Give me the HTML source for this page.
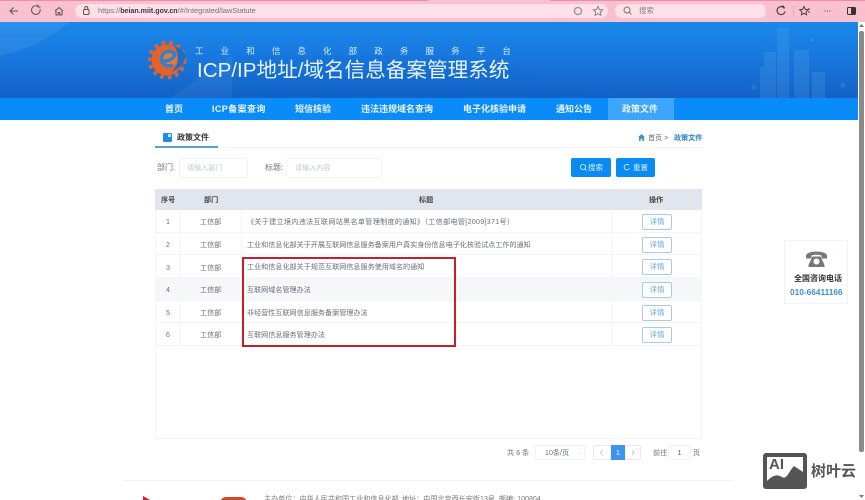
<!DOCTYPE html>
<html lang="zh"><head><meta charset="utf-8"><title>政策文件</title>
<style>
*{box-sizing:border-box}
html,body{margin:0;padding:0;width:865px;height:500px;overflow:hidden;background:#fff}
body{position:relative;font-family:"Liberation Sans","Noto Sans CJK SC",sans-serif;color:#666}
#p{position:absolute;left:0;top:0;width:865px;height:500px;overflow:hidden;filter:blur(.3px)}
.a{position:absolute;white-space:nowrap}
.row{position:absolute;left:155px;width:547px;border-bottom:1px solid #f1f3f5}
.c{position:absolute;white-space:nowrap;font-size:7.1px;line-height:12px;color:#68707a}
.btn{position:absolute;left:642px;width:30px;height:16px;border:1px solid #a9cbe6;border-radius:2px;font-size:7.5px;line-height:14px;text-align:center;color:#6aa6d6;background:#fff}
.nav{position:absolute;top:98px;height:22px;line-height:22px;font-size:9px;font-weight:bold;color:#eaf5ff;white-space:nowrap}
.sub{position:absolute;left:195px;top:46px;width:316px;display:flex;justify-content:space-between;font-size:8.5px;line-height:11px;color:#d9ecff}
.v{position:absolute;width:1px;background:#f3f5f7;top:210px;height:136px}
</style></head><body><div id="p">

<!-- browser bar -->
<div class="a" style="left:0;top:0;width:865px;height:22px;background:#f9c1d0"></div>
<div class="a" style="left:0;top:0;width:428px;height:1px;background:#ee8ea6"></div>
<div class="a" style="left:550px;top:0;width:315px;height:1px;background:#ee8ea6"></div>
<div class="a" style="left:75px;top:4px;width:533px;height:14px;border-radius:7px;background:#fde0e8"></div>
<div class="a" style="left:615px;top:4px;width:151px;height:14px;border-radius:7px;background:#fde0e8"></div>
<svg class="a" style="left:0;top:0" width="865" height="22" fill="none" stroke="#5d5358" stroke-width="1">
<path d="M18 11H10M13.500 7.500L10 11l3.500 3.500"/>
<path d="M40 9a4.300 4.300 0 1 1-1.500-2.300M38 4.500v2.500h2.500" />
<path d="M55 11l4-3.500 4 3.500M56 10.500V15h2.200v-2.500h1.600V15H62v-4.500"/>
<rect x="83.500" y="9.500" width="5.500" height="5" rx="1"/><path d="M84.800 9.500V8a1.500 1.500 0 0 1 3 0v1.500"/>
<circle cx="578" cy="11" r="3.600" stroke="#9a9a9a" stroke-width="1.400"/>
<path d="M598 6.500l1.400 3 3.300.4-2.400 2.200.6 3.200-2.900-1.600-2.900 1.600.6-3.200-2.400-2.200 3.300-.4z" stroke="#8c8286"/>
<circle cx="627" cy="10" r="3" stroke="#7a7478"/><path d="M629.300 12.300l2.200 2.200" stroke="#7a7478"/>
<path d="M784.500 8.500a4 4 0 1 0 .5 3M781 6.500l2-.5 1.500 2" stroke="#4a4448" stroke-width="1.200"/>
<path d="M793.500 6v10" stroke="#e8a8b8"/>
<path d="M804 6.500l1.300 2.800 3 .4-2.200 2.100.5 3-2.600-1.500-2.600 1.500.5-3-2.200-2.100 3-.4z" stroke="#4a4448"/>
<path d="M808 9h2M808 12h2" stroke="#4a4448"/>
<path d="M824.500 11h1M827 11h1M829.500 11h1" stroke="#4a4448"/>
<rect x="847.500" y="7.500" width="8" height="7" rx="1" stroke="#333"/><rect x="851" y="8" width="4" height="6" fill="#333" stroke="none"/>
</svg>
<div class="a" style="left:98px;top:5px;font-size:7.400px;line-height:12px;color:#77707a">https://<span style="color:#3c3842;font-weight:bold;font-size:7.100px">beian.miit.gov.cn</span>/#/Integrated/lawStatute</div>
<div class="a" style="left:639px;top:5px;font-size:7.500px;line-height:12px;color:#8a8088">搜索</div>

<!-- header -->
<div class="a" style="left:0;top:22px;width:858px;height:76px;background:linear-gradient(180deg,#1a88ea 0%,#1878de 45%,#1462c6 100%);overflow:hidden">
<svg width="858" height="76" style="position:absolute;left:0;top:0">
<path d="M0 0H70Q40 25 0 34Z" fill="#fff" opacity=".07"/>
<path d="M170 76L232 34V76Z" fill="#fff" opacity=".05"/>
<path d="M232 34H470L620 76H232Z" fill="#0d5ec8" opacity=".1"/>
<g fill="#6fb4f0" opacity=".18">
<rect x="760" y="45" width="14" height="31"/><rect x="764" y="30" width="12" height="46"/>
<rect x="777" y="6" width="12" height="70"/><rect x="794" y="28" width="15" height="48"/><rect x="812" y="50" width="13" height="26"/>
<circle cx="754" cy="65" r="2.500"/><circle cx="812" cy="18" r="2"/><circle cx="843" cy="63" r="2.500"/>
</g>
</svg>
</div>
<!-- logo -->
<svg class="a" style="left:148px;top:39px" width="42" height="42" viewBox="0 0 42 42">
<circle cx="19" cy="21" r="15.500" fill="#e2622a"/>
<circle cx="19" cy="21" r="17.500" fill="none" stroke="#e2622a" stroke-width="4" stroke-dasharray="3.500 4.200"/>
<circle cx="21" cy="20" r="8" fill="#e9792f"/>
<path d="M13 22C19 23 25 20 27 16C24 11 17 11 14 17C12 23 17 29 25 26" fill="none" stroke="#2284e0" stroke-width="3.200"/>
<path d="M26 7C33 9 37 14 38 17C36 25 30 31 23 33C30 28 33 17 26 7Z" fill="#1a6fc8"/>
</svg>
<div class="sub"><span>工</span><span>业</span><span>和</span><span>信</span><span>息</span><span>化</span><span>部</span><span>政</span><span>务</span><span>服</span><span>务</span><span>平</span><span>台</span></div>
<div class="a" style="left:197px;top:58px;font-size:20.600px;line-height:26px;color:#eaf4ff">ICP/IP地址/域名信息备案管理系统</div>

<!-- nav -->
<div class="a" style="left:0;top:98px;width:858px;height:22px;background:#0a8bfa"></div>
<div class="a" style="left:608px;top:98px;width:66px;height:22px;background:#3da5fb"></div>
<div class="nav" style="left:165px">首页</div>
<div class="nav" style="left:212px;letter-spacing:.4px">ICP备案查询</div>
<div class="nav" style="left:295px">短信核验</div>
<div class="nav" style="left:361px">违法违规域名查询</div>
<div class="nav" style="left:463px">电子化核验申请</div>
<div class="nav" style="left:556px">通知公告</div>
<div class="nav" style="left:622px">政策文件</div>

<!-- section title -->
<div class="a" style="left:155px;top:147px;width:547px;height:1px;background:#f1f3f5"></div>
<div class="a" style="left:155px;top:146px;width:63px;height:2px;background:#5aa0d8"></div>
<div class="a" style="left:163px;top:133px;width:9px;height:9px;background:#1a8ee8;border-radius:1px"></div>
<div class="a" style="left:168px;top:134px;width:3px;height:3px;background:#cfe8fb"></div>
<div class="a" style="left:177px;top:131px;font-size:8px;line-height:14px;font-weight:bold;color:#333">政策文件</div>
<svg class="a" style="left:638px;top:134px" width="7" height="7"><path d="M3.500 0L7 3.200H6V7H4.300V4.800H2.700V7H1V3.200H0Z" fill="#4d8fc4"/></svg>
<div class="a" style="left:648px;top:131px;font-size:7.100px;line-height:14px;color:#666">首页 &gt;</div>
<div class="a" style="left:674px;top:131px;font-size:7.100px;line-height:14px;font-weight:bold;color:#2b83cc">政策文件</div>

<!-- filters -->
<div class="a" style="left:157px;top:162px;font-size:8px;line-height:12px;color:#777">部门:</div>
<div class="a" style="left:179px;top:158px;width:69px;height:20px;border:1px solid #f0f2f4;border-radius:2px"></div>
<div class="a" style="left:187px;top:162px;font-size:7.100px;line-height:12px;color:#c4c9ce">请输入部门</div>
<div class="a" style="left:265px;top:162px;font-size:8px;line-height:12px;color:#777">标题:</div>
<div class="a" style="left:286px;top:158px;width:96px;height:20px;border:1px solid #f0f2f4;border-radius:2px"></div>
<div class="a" style="left:295px;top:162px;font-size:7.100px;line-height:12px;color:#c4c9ce">请输入内容</div>
<div class="a" style="left:571px;top:158px;width:40px;height:19px;background:#0a8bf2;border-radius:2px"></div>
<div class="a" style="left:616px;top:158px;width:39px;height:19px;background:#0a8bf2;border-radius:2px"></div>
<svg class="a" style="left:571px;top:158px" width="84" height="19" fill="none" stroke="#cfe8ff" stroke-width=".9">
<circle cx="12" cy="9" r="2.600"/><path d="M14 11l1.500 1.500"/>
<path d="M58 7.200a2.800 2.800 0 1 0 .5 3"/>
</svg>
<div class="a" style="left:588px;top:161px;font-size:7.500px;line-height:13px;color:#d8eeff">搜索</div>
<div class="a" style="left:633px;top:161px;font-size:7.500px;line-height:13px;color:#d8eeff">重置</div>

<!-- table -->
<div class="a" style="left:155px;top:189px;width:547px;height:21px;background:#e0e5ee"></div>
<div class="a" style="left:155px;top:278px;width:547px;height:23px;background:#f6f7f9"></div>
<div class="row" style="top:210px;height:23px"></div>
<div class="row" style="top:233px;height:22px"></div>
<div class="row" style="top:255px;height:23px"></div>
<div class="row" style="top:278px;height:23px"></div>
<div class="row" style="top:301px;height:22px"></div>
<div class="row" style="top:323px;height:23px"></div>
<div class="v" style="left:180px"></div><div class="v" style="left:241px"></div><div class="v" style="left:611px"></div>
<div class="a" style="left:155px;top:210px;width:1px;height:229px;background:#f3f5f7"></div>
<div class="a" style="left:701px;top:210px;width:1px;height:229px;background:#f3f5f7"></div>
<div class="a" style="left:155px;top:438px;width:547px;height:1px;background:#f1f3f5"></div>

<div class="c" style="left:161px;top:194px;font-weight:bold;color:#444">序号</div>
<div class="c" style="left:204px;top:194px;font-weight:bold;color:#444">部门</div>
<div class="c" style="left:419px;top:194px;font-weight:bold;color:#444">标题</div>
<div class="c" style="left:649px;top:194px;font-weight:bold;color:#444">操作</div>

<div class="c" style="left:166px;top:216px">1</div><div class="c" style="left:200px;top:216px">工信部</div>
<div class="c" style="left:247px;top:216px;letter-spacing:.3px">《关于建立境内违法互联网站黑名单管理制度的通知》（工信部电管[2009]371号）</div>
<div class="btn" style="top:214px">详情</div>
<div class="c" style="left:166px;top:239px">2</div><div class="c" style="left:200px;top:239px">工信部</div>
<div class="c" style="left:247px;top:239px">工业和信息化部关于开展互联网信息服务备案用户真实身份信息电子化核验试点工作的通知</div>
<div class="btn" style="top:237px">详情</div>
<div class="c" style="left:166px;top:262px">3</div><div class="c" style="left:200px;top:262px">工信部</div>
<div class="c" style="left:247px;top:261px">工业和信息化部关于规范互联网信息服务使用域名的通知</div>
<div class="btn" style="top:259px">详情</div>
<div class="c" style="left:166px;top:284px">4</div><div class="c" style="left:200px;top:284px">工信部</div>
<div class="c" style="left:247px;top:284px">互联网域名管理办法</div>
<div class="btn" style="top:282px">详情</div>
<div class="c" style="left:166px;top:307px">5</div><div class="c" style="left:200px;top:307px">工信部</div>
<div class="c" style="left:247px;top:307px">非经营性互联网信息服务备案管理办法</div>
<div class="btn" style="top:305px">详情</div>
<div class="c" style="left:166px;top:329px">6</div><div class="c" style="left:200px;top:329px">工信部</div>
<div class="c" style="left:247px;top:329px">互联网信息服务管理办法</div>
<div class="btn" style="top:327px">详情</div>

<!-- red box -->
<div class="a" style="left:242px;top:257px;width:214px;height:90px;border:2px solid #c5202a"></div>

<!-- pagination -->
<div class="c" style="left:507px;top:447px">共 6 条</div>
<div class="a" style="left:535px;top:445px;width:50px;height:15px;border:1px solid #f0f2f4;border-radius:2px"></div>
<div class="c" style="left:545px;top:447px">10条/页</div>
<div class="a" style="left:577px;top:451px;font-size:5px;line-height:5px;color:#ccc">⌄</div>
<div class="a" style="left:593px;top:445px;width:48px;height:15px;border:1px solid #e6e9ee;border-radius:2px"></div>
<div class="a" style="left:611px;top:445px;width:14px;height:15px;background:#3d94ec;color:#eef6ff;font-size:7.500px;line-height:15px;text-align:center">1</div>
<svg class="a" style="left:593px;top:445px" width="48" height="15" fill="none" stroke="#b8bec6" stroke-width=".8"><path d="M9.500 5l-2 2.500 2 2.500M39 5l2 2.500-2 2.500"/></svg>
<div class="c" style="left:653px;top:447px">前往</div>
<div class="a" style="left:668px;top:445px;width:23px;height:15px;border:1px solid #f0f2f4;border-radius:2px;font-size:7.500px;line-height:13px;text-align:center;color:#666">1</div>
<div class="c" style="left:693px;top:447px">页</div>

<!-- phone widget -->
<div class="a" style="left:784px;top:240px;width:64px;height:64px;border:1px solid #edf3f8;background:#fff"></div>
<svg class="a" style="left:805px;top:249px" width="23" height="20" viewBox="0 0 23 20" fill="#777">
<path d="M1 7C1 1 22 1 22 7V9.500H16.500V6.500C14 5.500 9 5.500 6.500 6.500V9.500H1Z"/>
<path d="M7.500 7.500H15.500L19.500 16V18H3.500V16ZM11.500 9.500a3 3 0 1 0 .01 0Z" fill-rule="evenodd"/>
</svg>
<div class="a" style="left:794px;top:273px;font-size:8px;line-height:12px;font-weight:bold;color:#333">全国咨询电话</div>
<div class="a" style="left:790px;top:286px;font-size:8.300px;line-height:12px;font-weight:bold;color:#3f8fcf">010-66411166</div>

<!-- footer -->
<div class="a" style="left:124px;top:480px;width:609px;height:1px;background:#f0f2f4"></div>
<div class="a" style="left:264px;top:494px;font-size:7.100px;line-height:10px;color:#777">主办单位：中华人民共和国工业和信息化部</div>
<div class="a" style="left:402px;top:494px;font-size:7.100px;line-height:10px;color:#777">地址：中国北京西长安街13号</div>
<div class="a" style="left:499px;top:494px;font-size:7.100px;line-height:10px;color:#777">邮编: 100804</div>
<div class="a" style="left:220px;top:497px;width:27px;height:6px;background:#cf4a2a;border-radius:14px 14px 0 0"></div>
<svg class="a" style="left:143px;top:496px" width="8" height="4"><path d="M0 0L7 4H0Z" fill="#c8232a"/></svg>

<!-- watermark -->
<div class="a" style="left:763px;top:453px;width:44px;height:36px;background:#555;border-radius:3px"></div>
<div class="a" style="left:767px;top:457px;width:36px;height:28px;background:#fff"></div>
<svg class="a" style="left:767px;top:457px" width="36" height="28"><path d="M0 24C6 18 10 17 15 20S22 14 27 9L36 15V28H0Z" fill="#555"/></svg>
<div class="a" style="left:769px;top:456px;font-size:15px;line-height:17px;font-weight:bold;color:#555">AI</div>
<div class="a" style="left:811px;top:463px;font-size:15px;line-height:18px;font-weight:bold;color:#555">树叶云</div>

<!-- scrollbar -->
<div class="a" style="left:858px;top:22px;width:7px;height:478px;background:#fff"></div>
<div class="a" style="left:859px;top:31px;width:5px;height:421px;background:#8a8a8a;border-radius:2px"></div>
<svg class="a" style="left:858px;top:22px" width="7" height="478" fill="#777"><path d="M3.500 2L6 5H1Z"/><path d="M3.500 476L6 473H1Z"/></svg>
</div></body></html>
